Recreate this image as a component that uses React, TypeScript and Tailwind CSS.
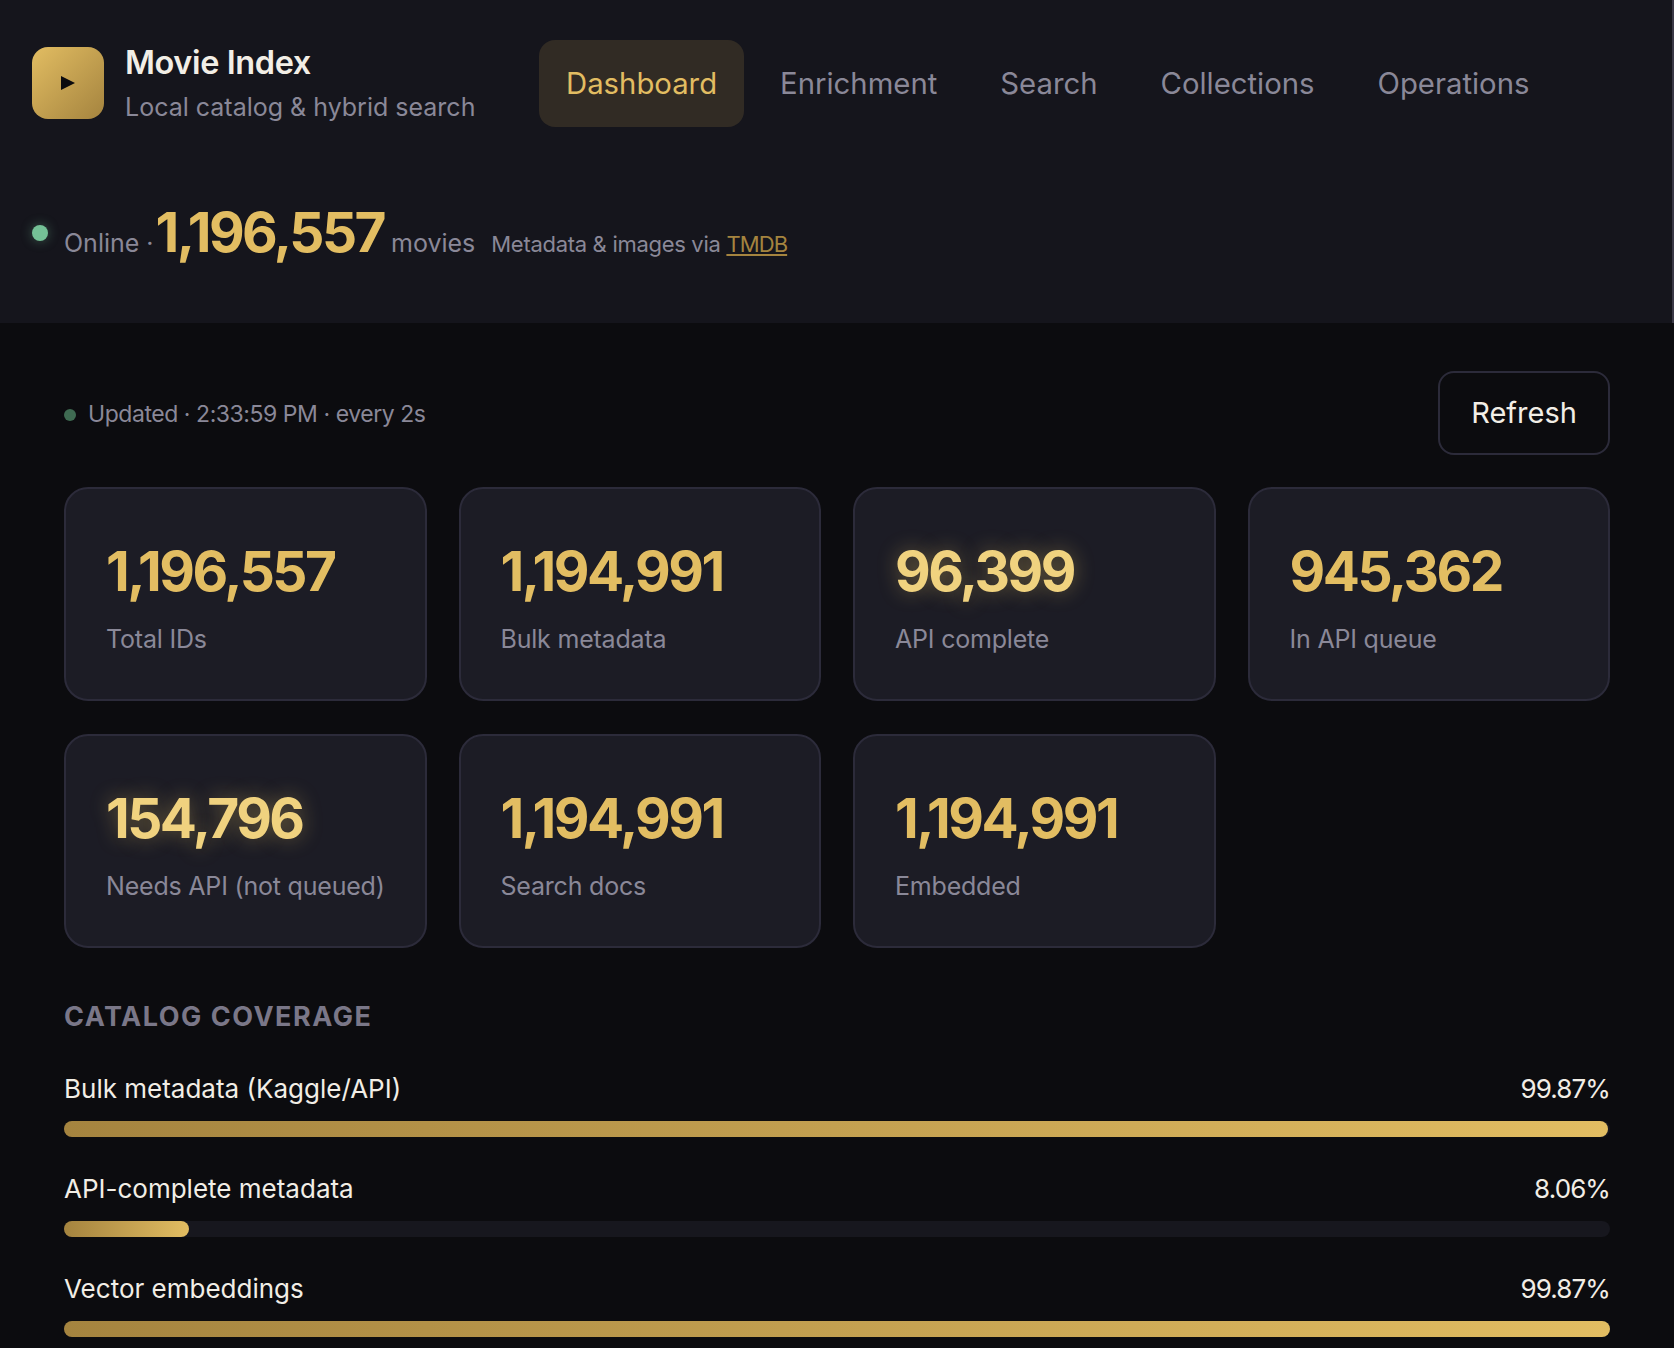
const navItems = ['Dashboard', 'Enrichment', 'Search', 'Collections', 'Operations'];

const stats = [
  { value: '1,196,557', label: 'Total IDs' },
  { value: '1,194,991', label: 'Bulk metadata' },
  { value: '96,399', label: 'API complete', glow: true },
  { value: '945,362', label: 'In API queue' },
  { value: '154,796', label: 'Needs API (not queued)', glow: true },
  { value: '1,194,991', label: 'Search docs' },
  { value: '1,194,991', label: 'Embedded' },
];

const coverage = [
  { label: 'Bulk metadata (Kaggle/API)', value: '99.87%', width: '99.87%' },
  { label: 'API-complete metadata', value: '8.06%', width: '8.06%' },
  { label: 'Vector embeddings', value: '99.87%', width: '100%' },
];

function Header() {
  return (
    <header className="h-[323px] border-r-2 border-[#3a3846] bg-[#15151c] px-8 pt-10">
      <div className="flex items-center">
        <div className="mb-[2px] flex h-[72px] w-[72px] items-center justify-center rounded-2xl bg-gradient-to-br from-[#e2bd62] to-[#a5843f]">
          <svg width="14" height="14" viewBox="0 0 14 14" className="text-[#0b0b0e]" fill="currentColor">
            <path d="M0 0L14 7L0 14Z" />
          </svg>
        </div>
        <div className="ml-[21px] w-[350px] whitespace-nowrap">
          <div className="text-[32.5px] leading-[40px] font-semibold tracking-[-0.4px] text-[#f2eee6]">Movie Index</div>
          <div className="mt-[6px] text-[25px] leading-[36px] text-[#8a8898]">Local catalog &amp; hybrid search</div>
        </div>
        <nav className="ml-16 flex gap-[9px] whitespace-nowrap">
          {navItems.map((item, i) => (
            <a
              key={item}
              className={
                i === 0
                  ? 'rounded-2xl bg-[#312b24] px-[27px] py-[22px] text-[29.3px] leading-[43px] text-[#e2bd62]'
                  : 'rounded-2xl px-[27px] py-[22px] text-[29.3px] leading-[43px] text-[#8a8898]'
              }
            >
              {item}
            </a>
          ))}
        </nav>
      </div>
      <div className="mt-[72px] flex items-baseline whitespace-nowrap">
        <span className="h-4 w-4 self-center rounded-full bg-[#74c196] shadow-[0_0_12px_#74c19666]" />
        <span className="ml-4 text-[25px] text-[#8a8898]">Online ·</span>
        <span className="ml-[2px] text-[55px] leading-[67px] font-bold tracking-[-2.5px] text-[#e2bd62]">1,196,557</span>
        <span className="ml-[7px] text-[25px] text-[#8a8898]">movies</span>
        <span className="ml-4 text-[22px] tracking-[-0.3px] text-[#8a8898]">
          Metadata &amp; images via <a className="tracking-[-0.9px] text-[#a5843f] underline">TMDB</a>
        </span>
      </div>
    </header>
  );
}

function StatCard({ value, label, glow }: { value: string; label: string; glow?: boolean }) {
  return (
    <div className="rounded-3xl border-2 border-[#2c2b3a] bg-[#1c1c25] p-10">
      <div
        className={
          glow
            ? 'text-[55px] leading-[84px] font-bold tracking-[-2.5px] text-[#f0d27f] [text-shadow:0_0_20px_#e2bd6266]'
            : 'text-[55px] leading-[84px] font-bold tracking-[-2.5px] text-[#e2bd62]'
        }
      >
        {value}
      </div>
      <div className="mt-[7px] whitespace-nowrap text-[25px] leading-[39px] tracking-[-0.2px] text-[#8a8898]">{label}</div>
    </div>
  );
}

function CoverageRow({ label, value, width }: { label: string; value: string; width: string }) {
  return (
    <div className="mb-8">
      <div className="mb-[13px] flex justify-between text-[26px] leading-[39px] text-[#f2eee6]">
        <span>{label}</span>
        <span className="tracking-[-0.9px]">{value}</span>
      </div>
      <div className="h-4 rounded-full bg-[#17171e]">
        <div className="h-4 rounded-full bg-gradient-to-r from-[#a5843f] to-[#e2bd62]" style={{ width }} />
      </div>
    </div>
  );
}

export default function App() {
  return (
    <div className="min-h-[1348px] overflow-hidden bg-[#0c0c0f] font-['Inter',sans-serif]">
      <Header />
      <main className="px-16 pt-12">
        <div className="mb-8 flex items-center justify-between">
          <div className="flex items-center pt-[2px] text-[23px] tracking-[-0.45px] text-[#8a8898]">
            <span className="mt-[2px] mr-3 h-3 w-3 rounded-full bg-[#3f6b52]" />
            Updated · 2:33:59 PM · every 2s
          </div>
          <button className="h-[84px] w-[172px] rounded-2xl border-2 border-[#2c2b3a] text-[29px] text-[#f2eee6]">
            Refresh
          </button>
        </div>
        <div className="grid grid-cols-4 gap-x-8 gap-y-[33px]">
          {stats.map((s, i) => (
            <StatCard key={i} {...s} />
          ))}
        </div>
        <h2 className="mt-[49px] mb-8 text-[27px] leading-[40px] font-bold tracking-[1.5px] text-[#7a7788]">
          CATALOG COVERAGE
        </h2>
        {coverage.map((row) => (
          <CoverageRow key={row.label} {...row} />
        ))}
      </main>
    </div>
  );
}
